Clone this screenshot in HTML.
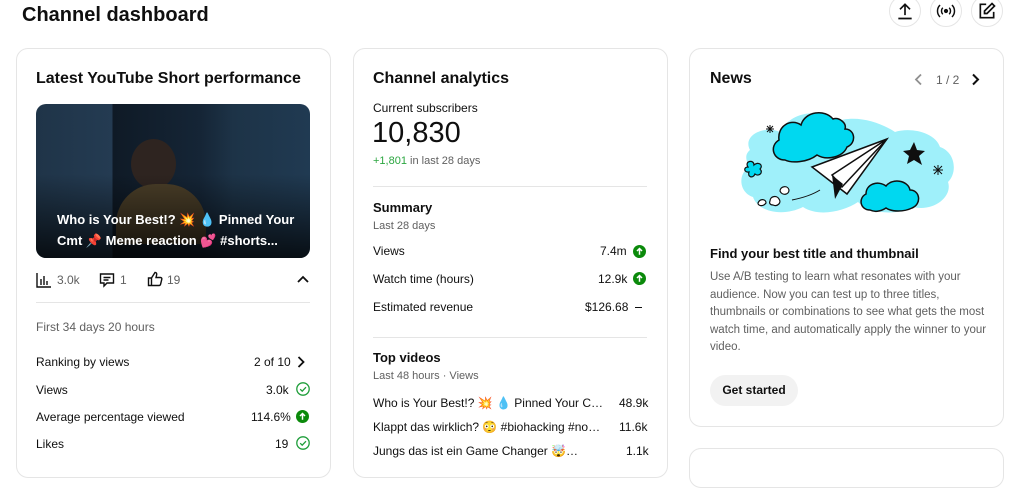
<!DOCTYPE html>
<html><head><meta charset="utf-8"><style>
*{margin:0;padding:0;box-sizing:border-box}
body{width:1024px;height:462px;overflow:hidden;background:#fff;font-family:"Liberation Sans","Noto Sans CJK SC",sans-serif;color:#0f0f0f;position:relative}
.a{position:absolute;white-space:nowrap}
.card{position:absolute;border:1px solid #e5e5e5;border-radius:12px;background:#fff}
.t{font-size:16px;font-weight:bold;line-height:20px}
.s{font-size:12px;color:#606060}
.r{font-size:12px;color:#0f0f0f}
.hr{position:absolute;height:1px;background:#e5e5e5}
.circ{position:absolute;width:32px;height:32px;border:1px solid #e5e5e5;border-radius:50%;top:-5px;display:flex;align-items:center;justify-content:center}
.up{position:absolute;width:13px;height:13px}
.ok{position:absolute;width:14px;height:14px}
.ell{overflow:hidden;text-overflow:ellipsis;width:232px}
</style></head><body>
<svg width="0" height="0" style="position:absolute"><defs>
<symbol id="up" viewBox="0 0 14 14"><circle cx="7" cy="7" r="7" fill="#0b8a0b"/><path d="M7 10.5V4M4.3 6.5L7 3.8l2.7 2.7" stroke="#fff" stroke-width="1.6" fill="none"/></symbol>
<symbol id="ok" viewBox="0 0 14 14"><circle cx="7" cy="7" r="6.2" fill="none" stroke="#1f9e3a" stroke-width="1.3"/><path d="M4.2 7.2l2 2 3.8-4" stroke="#1f9e3a" stroke-width="1.3" fill="none"/></symbol>
</defs></svg>
<div class="a" style="left:22px;top:2px;font-size:20px;font-weight:bold;line-height:26px">Channel dashboard</div>
<div class="circ" style="left:889px"><svg width="20" height="20" viewBox="0 0 24 24" fill="none" stroke="#0f0f0f" stroke-width="2"><path d="M12 17V4M6 10l6-6 6 6M4 21h16"/></svg></div>
<div class="circ" style="left:930px"><svg width="22" height="22" viewBox="0 0 24 24" fill="none" stroke="#0f0f0f" stroke-width="1.6"><circle cx="12" cy="12" r="1.5" fill="#0f0f0f"/><path d="M8.5 8.5a5 5 0 000 7M15.5 8.5a5 5 0 010 7M5.5 5.5a9 9 0 000 13M18.5 5.5a9 9 0 010 13"/></svg></div>
<div class="circ" style="left:971px"><svg width="20" height="20" viewBox="0 0 24 24" fill="none" stroke="#0f0f0f" stroke-width="2"><path d="M11 4H4v16h16v-7"/><path d="M18 3l3 3-9 9H9v-3z"/></svg></div>

<!-- Card 1 -->
<div class="card" style="left:16px;top:48px;width:315px;height:430px"></div>
<div class="a t" style="left:36px;top:69px">Latest YouTube Short performance</div>
<div class="a" style="left:36px;top:104px;width:274px;height:154px;border-radius:10px;overflow:hidden;background:linear-gradient(90deg,#1f3448 0%,#243b52 28%,#0f1a26 28%,#152536 60%,#1d3347 72%,#203a52 100%)">
 <div class="a" style="left:95px;top:35px;width:45px;height:50px;border-radius:50%;background:#2e2420"></div>
 <div class="a" style="left:80px;top:80px;width:90px;height:60px;border-radius:40px 40px 0 0;background:#4a3e28"></div>
 <div class="a" style="left:0;top:70px;width:274px;height:84px;background:linear-gradient(180deg,rgba(0,0,0,0),rgba(0,0,0,.75))"></div>
 <div class="a" style="left:21px;top:105px;color:#fff;font-size:13px;font-weight:bold;line-height:21px">Who is Your Best!? 💥 💧 Pinned Your<br>Cmt 📌 Meme reaction 💕 #shorts...</div>
</div>
<svg class="a" style="left:36px;top:272px" width="16" height="16" viewBox="0 0 16 16" fill="none" stroke="#0f0f0f" stroke-width="1.4"><path d="M1 1v14h14M5 13V7M8 13V4M11 13V9"/></svg>
<div class="a s" style="left:57px;top:273px;font-size:12px">3.0k</div>
<svg class="a" style="left:99px;top:272px" width="16" height="16" viewBox="0 0 16 16" fill="none" stroke="#0f0f0f" stroke-width="1.4"><path d="M1.5 2h13v9H8l-3 3v-3H1.5z M4.5 5.5h7M4.5 8h5"/></svg>
<div class="a s" style="left:120px;top:273px">1</div>
<svg class="a" style="left:147px;top:271px" width="16" height="16" viewBox="0 0 16 16" fill="none" stroke="#0f0f0f" stroke-width="1.4"><path d="M1.5 7h3v7.5h-3zM4.5 7l3.5-5.5c1.5 0 2 1 1.6 2.5L9 6.5h4.5c1 0 1.5.8 1.3 1.7l-1.2 5c-.2.8-.8 1.3-1.6 1.3H4.5"/></svg>
<div class="a s" style="left:167px;top:273px">19</div>
<svg class="a" style="left:297px;top:275px" width="12" height="10" viewBox="0 0 12 10" fill="none" stroke="#0f0f0f" stroke-width="1.8"><path d="M1 7l5-5 5 5"/></svg>
<div class="hr" style="left:36px;top:302px;width:274px"></div>
<div class="a s" style="left:36px;top:320px">First 34 days 20 hours</div>
<div class="a r" style="left:36px;top:355px">Ranking by views</div><div class="a r" style="left:254px;top:355px">2 of 10</div>
<svg class="a" style="left:297px;top:356px" width="8" height="12" viewBox="0 0 8 12" fill="none" stroke="#0f0f0f" stroke-width="1.8"><path d="M1.5 1l5 5-5 5"/></svg>
<div class="a r" style="left:36px;top:383px">Views</div><div class="a r" style="left:266px;top:383px">3.0k</div><svg class="ok" style="left:296px;top:382px"><use href="#ok"/></svg>
<div class="a r" style="left:36px;top:410px">Average percentage viewed</div><div class="a r" style="left:251px;top:410px">114.6%</div><svg class="up" style="left:296px;top:410px"><use href="#up"/></svg>
<div class="a r" style="left:36px;top:437px">Likes</div><div class="a r" style="left:275px;top:437px">19</div><svg class="ok" style="left:296px;top:436px"><use href="#ok"/></svg>

<!-- Card 2 -->
<div class="card" style="left:353px;top:48px;width:315px;height:430px"></div>
<div class="a t" style="left:373px;top:69px">Channel analytics</div>
<div class="a r" style="left:373px;top:101px">Current subscribers</div>
<div class="a" style="left:372px;top:117px;font-size:29px;line-height:32px">10,830</div>
<div class="a s" style="left:373px;top:155px;font-size:11px"><span style="color:#2ba640">+1,801</span> in last 28 days</div>
<div class="hr" style="left:373px;top:186px;width:274px"></div>
<div class="a" style="left:373px;top:200px;font-size:13px;font-weight:bold">Summary</div>
<div class="a s" style="left:373px;top:220px;font-size:11px">Last 28 days</div>
<div class="a r" style="left:373px;top:244px">Views</div><div class="a r" style="left:600px;top:244px">7.4m</div><svg class="up" style="left:633px;top:245px"><use href="#up"/></svg>
<div class="a r" style="left:373px;top:272px">Watch time (hours)</div><div class="a r" style="left:598px;top:272px">12.9k</div><svg class="up" style="left:633px;top:272px"><use href="#up"/></svg>
<div class="a r" style="left:373px;top:300px">Estimated revenue</div><div class="a r" style="left:585px;top:300px">$126.68</div><div class="a" style="left:635px;top:307px;width:7px;height:1px;background:#0f0f0f"></div>
<div class="hr" style="left:373px;top:337px;width:274px"></div>
<div class="a" style="left:373px;top:350px;font-size:13px;font-weight:bold">Top videos</div>
<div class="a s" style="left:373px;top:370px;font-size:11px">Last 48 hours · Views</div>
<div class="a r ell" style="left:373px;top:396px">Who is Your Best!? 💥 💧 Pinned Your Cmt 📌 The best</div><div class="a r" style="left:619px;top:396px">48.9k</div>
<div class="a r ell" style="left:373px;top:420px">Klappt das wirklich? 😳 #biohacking #nosestrips #tips</div><div class="a r" style="left:619px;top:420px">11.6k</div>
<div class="a r ell" style="left:373px;top:444px;width:208px">Jungs das ist ein Game Changer 🤯 #review #tips</div><div class="a r" style="left:626px;top:444px">1.1k</div>

<!-- Card 3 -->
<div class="card" style="left:689px;top:48px;width:315px;height:379px"></div>
<div class="card" style="left:689px;top:448px;width:315px;height:40px"></div>
<div class="a t" style="left:710px;top:69px">News</div>
<svg class="a" style="left:914px;top:73px" width="9" height="13" viewBox="0 0 9 13" fill="none" stroke="#909090" stroke-width="1.8"><path d="M7 1.5l-5 5 5 5"/></svg>
<div class="a s" style="left:936px;top:73px;font-size:12px">1 / 2</div>
<svg class="a" style="left:971px;top:73px" width="9" height="13" viewBox="0 0 9 13" fill="none" stroke="#0f0f0f" stroke-width="2"><path d="M2 1.5l5 5-5 5"/></svg>
<svg class="a" style="left:730px;top:105px" width="230" height="120" viewBox="0 0 230 120">
 <path d="M20 45c-8-15 15-25 30-18 10-20 40-25 55-10 20-8 45 0 60 10 15-5 40 0 45 15 15 5 18 25 8 35 5 15-15 30-35 25-20 10-45 5-55-5-15 10-40 15-55 5-20 10-45 5-50-10-15-5-15-25-3-30-5-7-5-13 0-17z" fill="#9ff0fa"/>
 <path d="M55 55c-12 0-16-14-6-20-2-14 12-22 22-15 4-14 24-16 32-6 6-2 14 4 12 10 10 0 12 14 2 18-4 10-20 14-30 8-10 8-26 8-32 5z" fill="#00d8f0" stroke="#0f0f0f" stroke-width="1.5"/>
 <path d="M140 105c-10 0-12-12-4-16 0-10 12-14 20-8 6-8 22-6 24 4 10 0 12 14 2 18-8 4-20 4-26 0-6 4-12 4-16 2z" fill="#00d8f0" stroke="#0f0f0f" stroke-width="1.5"/>
 <path d="M82 62l75-28-40 55z" fill="#fff" stroke="#0f0f0f" stroke-width="1.5"/>
 <path d="M102 70l55-36-45 48z" fill="#fff" stroke="#0f0f0f" stroke-width="1.5"/>
 <path d="M102 70l3 24 8-15z" fill="#0f0f0f"/>
 <path d="M180 45l4-8 3 8 8 1-6 5 3 9-8-5-7 4 2-8-6-5z" fill="#0f0f0f"/>
 <path d="M18 62c-4-6 6-8 6-2 4-4 10 0 6 4 4 4-2 8-5 5-2 5-8 3-6-2-5 1-6-5-1-5z" fill="#00d8f0" stroke="#0f0f0f" stroke-width="1.2"/>
 <path d="M28 98c2-5 8-4 8 0-3 4-8 3-8 0zM40 96c0-5 7-6 9-2 3 4-2 8-6 6-3 0-4-2-3-4zM50 86c0-5 8-6 9-1 0 5-7 6-9 1z" fill="#fff" stroke="#0f0f0f" stroke-width="1.2"/>
 <path d="M62 95c10-2 20-5 28-10" stroke="#0f0f0f" fill="none" stroke-width="1"/>
 <path d="M40 20l0 8M36 24l8 0M37 21l6 6M43 21l-6 6" stroke="#0f0f0f" stroke-width="1"/>
 <path d="M208 60l0 10M203 65l10 0M204 61l8 8M212 61l-8 8" stroke="#0f0f0f" stroke-width="1"/>
</svg>
<div class="a" style="left:710px;top:246px;font-size:13px;font-weight:bold">Find your best title and thumbnail</div>
<div class="a" style="left:710px;top:269px;font-size:11.5px;line-height:17.5px;color:#606060;white-space:normal;width:280px">Use A/B testing to learn what resonates with your audience. Now you can test up to three titles, thumbnails or combinations to see what gets the most watch time, and automatically apply the winner to your video.</div>
<div class="a" style="left:710px;top:375px;width:88px;height:31px;border-radius:16px;background:#f2f2f2;font-size:12px;font-weight:bold;line-height:31px;text-align:center">Get started</div>
</body></html>
